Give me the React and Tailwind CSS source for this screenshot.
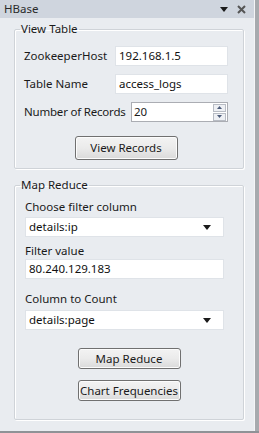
import React from 'react';

// Small triangle used by the dropdowns and the panel menu
function DownArrow({ className = '' }) {
  return (
    <svg width="8" height="5" viewBox="0 0 8 5" className={className}>
      <path d="M0 0 H8 L4 5 Z" fill="#1a1a1a" />
    </svg>
  );
}

function TextBox({ value, className = '' }) {
  return (
    <div
      className={`h-[20px] bg-white border border-[#dfe3e8] flex items-center pl-[3px] text-[11.5px] text-[#111] whitespace-nowrap ${className}`}
    >
      {value}
    </div>
  );
}

function Select({ value }) {
  return (
    <div className="h-[20px] w-[199px] bg-white border border-[#dfe3e8] flex items-center pl-[3px] pr-[12px] text-[11.5px] text-[#111]">
      <span className="flex-1">{value}</span>
      <DownArrow />
    </div>
  );
}

function Button({ children, className = 'h-[24px]' }) {
  return (
    <div className={`w-[103px] mx-auto flex items-center justify-center rounded-[3px] border border-[#707070] bg-gradient-to-b from-[#f3f3f3] via-[#ebebeb] to-[#dadada] text-[11.5px] text-[#1a1a1a] whitespace-nowrap shadow-[inset_0_0_0_1px_#fcfcfc] ${className}`}>
      {children}
    </div>
  );
}

function GroupBox({ title, children }) {
  return (
    <fieldset className="ml-[14px] mr-[10px] border border-[#cfd3d8] rounded-[2px] shadow-[inset_1px_1px_0_#ffffff,1px_1px_0_#ffffff]">
      <legend className="ml-[5px] px-[1px] text-[11.5px] leading-[14px] text-[#1a1a1a]">{title}</legend>
      {children}
    </fieldset>
  );
}

export default function App() {
  return (
    <div
      className="w-[259px] h-[433px] flex flex-col bg-[#8f9296] overflow-hidden"
      style={{ fontFamily: '"Noto Sans", "Open Sans", sans-serif' }}
    >
      <div className="flex flex-1">
        <div className="w-[254px] flex flex-col bg-[#e9ecf0]">
          {/* Panel header */}
          <div className="h-[18px] bg-[#cfd5de] flex items-center pl-[4px] pr-[8px] text-[11.5px] text-[#2a2a2a]">
            <span className="flex-1">HBase</span>
            <DownArrow className="mr-[9px]" />
            <svg width="9" height="9" viewBox="0 0 9 9">
              <path d="M1 1 L8 8 M8 1 L1 8" stroke="#555" strokeWidth="2" />
            </svg>
          </div>

          <div className="mt-[4px]">
            <GroupBox title="View Table">
              <div className="pl-[9px] pr-[15px] pt-[10px] pb-[8px] flex flex-col gap-[8px] text-[11.5px] leading-[14px] text-[#1a1a1a] whitespace-nowrap">
                <div className="flex items-center">
                  <span className="flex-1">ZookeeperHost</span>
                  <TextBox value="192.168.1.5" className="w-[113px]" />
                </div>
                <div className="flex items-center">
                  <span className="flex-1">Table Name</span>
                  <TextBox value="access_logs" className="w-[113px]" />
                </div>
                <div className="flex items-center">
                  <span className="flex-1 tracking-[-0.2px]">Number of Records</span>
                  <div className="w-[97px] h-[20px] bg-white border border-[#abadb3] flex items-center pl-[2px] pr-[1px]">
                    <span className="flex-1">20</span>
                    <div className="flex flex-col gap-[1px]">
                      <div className="w-[13px] h-[8px] border border-[#b8bcc4] bg-[#eef0f4] flex items-center justify-center">
                        <svg width="5" height="3" viewBox="0 0 5 3"><path d="M0 3 L2.5 0 L5 3 Z" fill="#4d5c7a" /></svg>
                      </div>
                      <div className="w-[13px] h-[8px] border border-[#b8bcc4] bg-[#eef0f4] flex items-center justify-center">
                        <svg width="5" height="3" viewBox="0 0 5 3"><path d="M0 0 L5 0 L2.5 3 Z" fill="#4d5c7a" /></svg>
                      </div>
                    </div>
                  </div>
                </div>
                <div className="mt-[6px]">
                  <Button>View Records</Button>
                </div>
              </div>
            </GroupBox>
          </div>

          <div className="mt-[9px]">
            <GroupBox title="Map Reduce">
              <div className="pl-[10px] pt-[8px] pb-[18px] flex flex-col text-[11.5px] leading-[14px] text-[#1a1a1a] whitespace-nowrap">
                <span>Choose filter column</span>
                <div className="mt-[3px]">
                  <Select value="details:ip" />
                </div>
                <span className="mt-[7px]">Filter value</span>
                <TextBox value="80.240.129.183" className="w-[199px] mt-[1px]" />
                <span className="mt-[13px]">Column to Count</span>
                <div className="mt-[4px]">
                  <Select value="details:page" />
                </div>
                <div className="mt-[18px] -ml-[10px]">
                  <Button className="h-[21px]">Map Reduce</Button>
                </div>
                <div className="mt-[11px] -ml-[10px]">
                  <Button className="h-[21px]">Chart Frequencies</Button>
                </div>
              </div>
            </GroupBox>
          </div>
        </div>
        <div className="w-[1px] bg-[#f4f5f7]" />
        <div className="flex-1 bg-[#a7aaae]" />
      </div>
      <div className="h-[2px] bg-[#8f9296]" />
    </div>
  );
}
